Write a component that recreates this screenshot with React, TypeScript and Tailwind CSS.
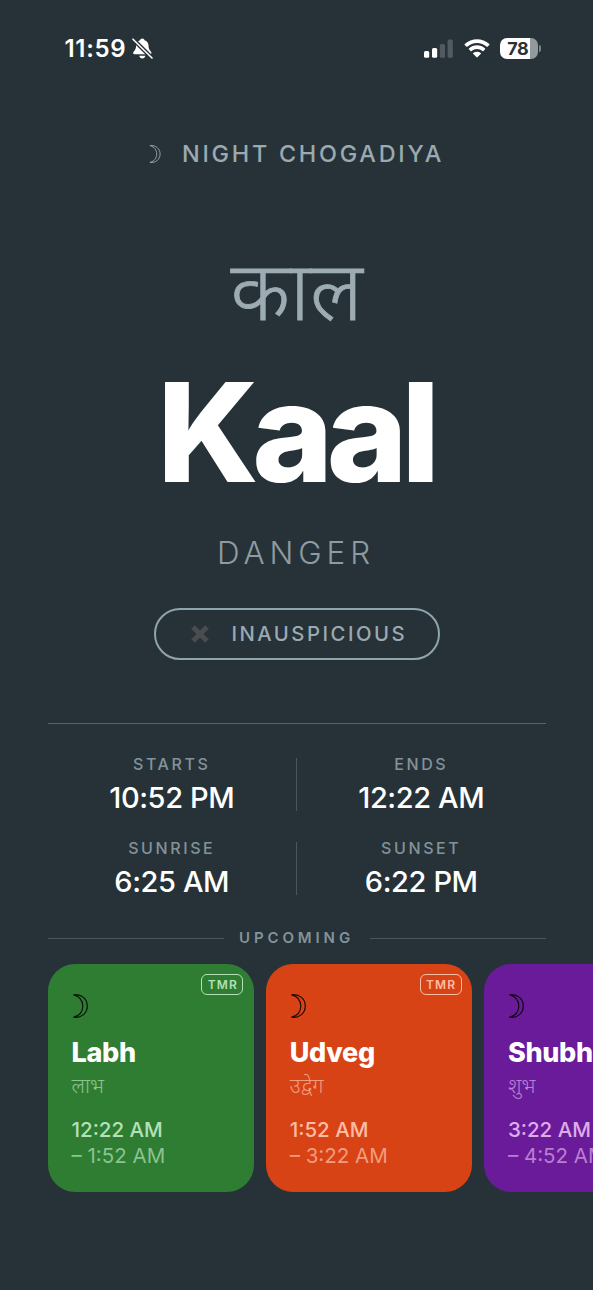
import React from "react";

type Slot = {
  name: string;
  hindi: string;
  start: string;
  end: string;
  card: string;
  strong: string;
  soft: string;
  badge: string;
};

const slots: Slot[] = [
  {
    name: "Labh",
    hindi: "लाभ",
    start: "12:22 AM",
    end: "1:52 AM",
    card: "bg-[#2e7d32]",
    strong: "text-[#b5e0b8]",
    soft: "text-[#8cc391]",
    badge: "border-[#b5e0b8] text-[#b5e0b8]",
  },
  {
    name: "Udveg",
    hindi: "उद्वेग",
    start: "1:52 AM",
    end: "3:22 AM",
    card: "bg-[#d84315]",
    strong: "text-[#fdbda5]",
    soft: "text-[#f39b7d]",
    badge: "border-[#fdbda5] text-[#fdbda5]",
  },
  {
    name: "Shubh",
    hindi: "शुभ",
    start: "3:22 AM",
    end: "4:52 AM",
    card: "bg-[#6a1b9a]",
    strong: "text-[#dbade9]",
    soft: "text-[#b97fcf]",
    badge: "border-[#dbade9] text-[#dbade9]",
  },
];

function Moon({ className }: { className: string }) {
  return (
    <svg viewBox="0 0 15 24" fill="none" stroke="currentColor" strokeWidth="1.2" strokeLinejoin="round" className={className}>
      <path d="M0.7 0.8C8.6 -0.2 14.3 5 14.3 12S8.6 24.2 0.7 23.2C6.6 21.6 9.8 17.5 9.8 12S6.6 2.4 0.7 0.8Z" />
    </svg>
  );
}

function StatusBar() {
  return (
    <div className="flex h-[97px] items-center justify-between pl-[64.5px] pr-[52px]">
      <div className="flex items-center gap-[6px]">
        <span className="text-[24px] font-semibold leading-6 tracking-[0.7px]">11:59</span>
        <svg viewBox="0 0 21 21" className="h-[21px] w-[21px]" fill="currentColor">
          <path d="M10.3 0.5C9 0.5 8.3 1.3 8.1 2.2C5.5 3 4.2 5 4.1 7.6C4 10.5 3.4 12 1.8 13.6C0.6 14.8 1 16.3 2.6 16.3H18C19.6 16.3 20 14.8 18.8 13.6C17.2 12 16.6 10.5 16.5 7.6C16.4 5 15.1 3 12.5 2.2C12.3 1.3 11.6 0.5 10.3 0.5Z" />
          <path d="M7.2 17.7H13.4C13.1 19.3 11.9 20.4 10.3 20.4S7.5 19.3 7.2 17.7Z" />
          <path d="M1 1.2L20 20" stroke="#263238" strokeWidth="4.2" />
          <path d="M1 1.2L20 20" stroke="currentColor" strokeWidth="1.6" strokeLinecap="round" />
        </svg>
      </div>
      <div className="flex items-center">
        <svg viewBox="0 0 29 19" className="h-[19px] w-[29px]" fill="currentColor">
          <rect x="0" y="12" width="5.2" height="6.8" rx="1.5" />
          <rect x="8" y="9" width="5.2" height="9.8" rx="1.5" />
          <rect x="15.8" y="5" width="5.2" height="13.8" rx="1.5" opacity="0.2" />
          <rect x="23.6" y="0.5" width="5.2" height="18.3" rx="1.5" opacity="0.2" />
        </svg>
        <svg viewBox="0 0 26 19" className="ml-[11px] h-[19px] w-[26px]" fill="currentColor">
          <path d="M13 3.9C16.7 3.9 20.1 5.3 22.7 7.8C22.9 8 23.2 8 23.4 7.8L25.3 5.9C25.5 5.7 25.5 5.3 25.3 5.1C18.5 -1.3 7.5 -1.3 0.7 5.1C0.5 5.3 0.5 5.7 0.7 5.9L2.6 7.8C2.8 8 3.1 8 3.3 7.8C5.9 5.3 9.3 3.9 13 3.9Z" />
          <path d="M13 10.1C15 10.1 17 10.9 18.5 12.2C18.7 12.4 19 12.4 19.2 12.2L21.1 10.3C21.3 10.1 21.3 9.7 21.1 9.5C16.5 5.3 9.5 5.3 4.9 9.5C4.7 9.7 4.7 10.1 4.9 10.3L6.8 12.2C7 12.4 7.3 12.4 7.5 12.2C9 10.9 11 10.1 13 10.1Z" />
          <path d="M16.9 14.7C17.1 14.5 17.1 14.2 16.8 14C14.6 12.3 11.4 12.3 9.2 14C8.9 14.2 8.9 14.5 9.1 14.7L12.6 18.3C12.8 18.5 13.2 18.5 13.4 18.3Z" />
        </svg>
        <div className="ml-[10px] flex h-[21px] w-[37.5px] items-center justify-center rounded-[7px] bg-linear-to-r from-white from-78% to-[#93999c] to-78% pr-[2px] text-[18px] font-bold leading-none tracking-[-0.5px] text-[#263238]">
          78
        </div>
        <div className="ml-[1.5px] h-[7px] w-[2px] rounded-r-full bg-[#7b8488]" />
      </div>
    </div>
  );
}

function TimeCell({ label, value }: { label: string; value: string }) {
  return (
    <div className="flex flex-1 flex-col items-center">
      <div className="text-[16px] font-medium leading-3 tracking-[2.6px] text-[#84929a]">{label}</div>
      <div className="mt-[14px] text-[29px] font-medium leading-[27px] tracking-[-0.4px]">{value}</div>
    </div>
  );
}

function SlotCard({ slot }: { slot: Slot }) {
  return (
    <div className={`relative h-[228px] w-[206.4px] shrink-0 rounded-[27px] pl-6 pt-[30px] ${slot.card}`}>
      <div
        className={`absolute right-[10.5px] top-[10px] flex h-[21px] w-[42px] items-center justify-center rounded-[6px] border-[1.5px] pl-[1px] text-[12px] font-semibold tracking-[1.1px] ${slot.badge}`}
      >
        TMR
      </div>
      <Moon className="ml-[1.5px] h-6 w-[15px] text-black/85" />
      <div className="mt-[19px] text-[27px] font-extrabold leading-8 tracking-[-0.3px]">{slot.name}</div>
      <div className={`h-[41px] pt-[3px] font-['Noto_Sans',sans-serif] text-[21px] font-light leading-[26px] ${slot.soft}`}>
        {slot.hindi}
      </div>
      <div className={`mt-[7px] text-[20.5px] font-medium leading-[26px] ${slot.strong}`}>{slot.start}</div>
      <div className={`text-[20.5px] leading-[25px] ${slot.soft}`}>– {slot.end}</div>
    </div>
  );
}

export default function App() {
  return (
    <div className="h-[1290px] w-[593px] overflow-hidden bg-[#263238] font-['Inter',sans-serif] text-white">
      <StatusBar />

      <div className="mt-[40px] flex h-[33px] items-center justify-center text-[#9ba9b1]">
        <Moon className="mr-[21px] h-[18px] w-3" />
        <span className="text-[23.4px] font-medium tracking-[2.75px]">NIGHT CHOGADIYA</span>
      </div>

      <div className="mt-[73px] h-[90px] text-center font-['Noto_Sans',sans-serif] text-[82px] font-light leading-[90px] text-[#9dabb3] [-webkit-text-stroke:0.8px_#9dabb3]">
        काल
      </div>
      <h1 className="mt-[29px] h-[140px] pr-[2px] text-center text-[137.5px] font-extrabold leading-[140px] tracking-[-6.4px]">
        Kaal
      </h1>
      <div className="mt-[31px] pr-px text-center text-[31.4px] font-light leading-10 tracking-[4.9px] text-[#8e9ba2]">
        DANGER
      </div>

      <div className="mx-auto mt-[35px] flex h-[52px] w-[286px] items-center rounded-full border-[2.5px] border-[#90a4ae] pl-[35px] text-[#9ba9b1]">
        <svg viewBox="0 0 18 18" className="h-[18px] w-[18px]" stroke="#4b4c4e" strokeWidth="5">
          <path d="M2 2L16 16M16 2L2 16" />
        </svg>
        <span className="ml-[23px] text-[20.3px] font-medium tracking-[2.5px]">INAUSPICIOUS</span>
      </div>

      <div className="mx-[47.5px] mt-[63px] h-px bg-[#56636a]" />

      <div className="mx-[47.5px] mt-[34px] flex h-[53px]">
        <TimeCell label="STARTS" value="10:52 PM" />
        <div className="w-px bg-[#4a565c]" />
        <TimeCell label="ENDS" value="12:22 AM" />
      </div>
      <div className="mx-[47.5px] mt-[31px] flex h-[53px]">
        <TimeCell label="SUNRISE" value="6:25 AM" />
        <div className="w-px bg-[#4a565c]" />
        <TimeCell label="SUNSET" value="6:22 PM" />
      </div>

      <div className="mx-[47.5px] mt-[33px] flex h-5 items-center">
        <div className="h-px flex-1 bg-[#4a565c]" />
        <div className="w-[146px] text-center text-[15px] font-semibold tracking-[3.9px] text-[#84929a]">
          UPCOMING
        </div>
        <div className="h-px flex-1 bg-[#4a565c]" />
      </div>

      <div className="mt-4 flex gap-[11.8px] overflow-hidden pl-[47.5px]">
        {slots.map((s) => (
          <SlotCard key={s.name} slot={s} />
        ))}
      </div>
    </div>
  );
}
